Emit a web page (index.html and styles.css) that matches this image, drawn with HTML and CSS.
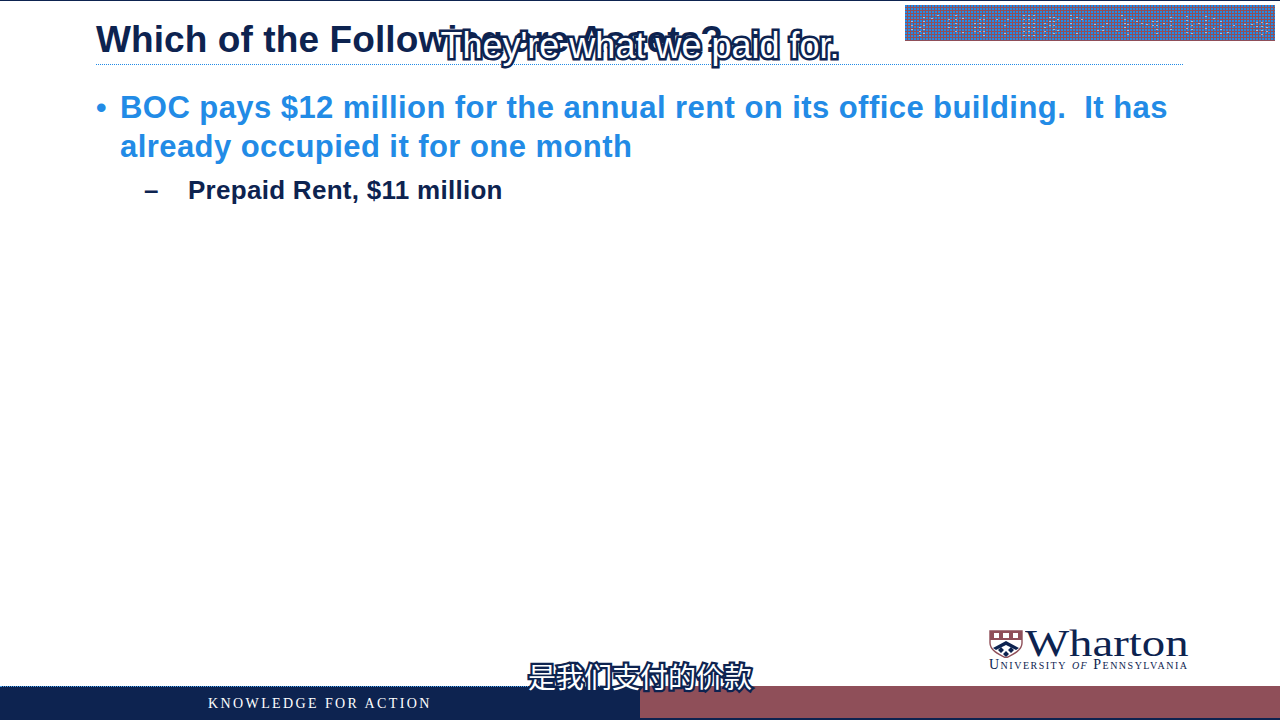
FILE: index.html
```html
<!DOCTYPE html>
<html lang="en">
<head>
<meta charset="utf-8">
<title>Which of the Following are Assets?</title>
<link rel="stylesheet" href="styles.css">
</head>
<body>
<div class="slide">
  <header class="head">
    <h1 class="title">Which of the Following are Assets?</h1>
  </header>
  <main class="content">
    <div class="bullet">
      <span class="dot">•</span>
      <p class="lead">BOC pays $12 million for the annual rent on its office building.&nbsp; It has already occupied it for one month</p>
    </div>
    <div class="sub">
      <span class="dash">–</span>
      <p class="subtext">Prepaid Rent, $11 million</p>
    </div>
  </main>
  <div class="brand">
    <svg class="crest" width="34" height="28" viewBox="0 0 34 28" aria-hidden="true">
      <path d="M1 1H33V13C33 20 25 24 17 28C9 24 1 20 1 13Z" fill="#fff" stroke="#8f4f59" stroke-width="1.4"/>
      <rect x="1" y="1" width="32" height="9" fill="#8f4f59"/>
      <path d="M5 3h5v5H5zM14 3h6v5h-6zM24 3h5v5h-5z" fill="#fff"/>
      <path d="M4 18L17 11L30 18L27 20L17 15L7 20Z" fill="#0d2350"/>
      <path d="M9 20l3-3 3 3-3 3zM19 20l3-3 3 3-3 3zM14 24l3-3 3 3-3 3z" fill="#0d2350"/>
    </svg>
    <div class="brand-text">
      <div class="wordmark">Wharton</div>
      <div class="univ">University <i>of</i> Pennsylvania</div>
    </div>
  </div>
  <footer class="foot">
    <div class="foot-left">KNOWLEDGE FOR ACTION</div>
    <div class="foot-right"></div>
  </footer>
  <svg class="stamp" width="370" height="36" viewBox="0 0 370 36" aria-hidden="true">
    <defs>
      <pattern id="dots" width="3" height="3" patternUnits="userSpaceOnUse">
        <rect width="2" height="2" fill="#228be6"/>
      </pattern>
    </defs>
    <rect width="370" height="36" fill="#8f4f59"/>
    <rect width="370" height="36" fill="url(#dots)"/>
    <path class="stamp-noise" d="M7 16v12M15 22v10M19 12v20M27 13v2M33 10v2M44 14v12M51 10v20M58 13v2M58 27v2M70 18v10M75 14v14M79 10v22M92 14v2M100 20v2M100 28v2M103 14v2M119 10v22M124 10v24M129 10v22M140 18v14M145 12v10M149 12v18M153 14v2M153 25v2M166 10v14M172 12v2M172 28v2M177 14v2M190 19v2M193 25v2M198 21v8M202 18v2M212 25v2M217 10v2M220 14v10M223 19v2M223 25v8M227 14v2M232 16v2M237 18v2M242 19v2M248 16v8M252 16v14M259 18v2M266 12v16M282 11v18M287 16v14M294 18v2M301 11v18M309 13v2M309 23v2M316 16v14M323 27v2M329 20v2M340 19v2M347 19v2M352 17v12M357 17v14M362 18v12"/>
  </svg>
  <div class="cap cap-en">They're what we paid for.</div>
  <div class="cap cap-zh">是我们支付的价款</div>
</div>
</body>
</html>
```
FILE: styles.css
```css
* { box-sizing: border-box; }
html, body { margin: 0; padding: 0; background: #fff; }
body { width: 1280px; height: 720px; overflow: hidden; font-family: "Liberation Sans", Arial, sans-serif; }
.slide { position: relative; width: 1280px; height: 720px; display: flex; flex-direction: column; background: #fff; border-top: 1px solid #0d2350; }
.head { margin: 0 97px 0 96px; height: 64px; padding-top: 16px; border-bottom: 1px dotted #228be6; }
.title { margin: 0; font-size: 37px; line-height: 46px; font-weight: 700; letter-spacing: 0.1px; color: #0d2350; white-space: nowrap; }
.content { padding: 23px 90px 0 96px; flex: 1; }
.bullet { display: flex; }
.dot { flex: none; width: 24px; font-size: 30px; line-height: 39px; font-weight: 700; color: #228be6; }
.lead { margin: 0; font-size: 31px; line-height: 39px; font-weight: 700; letter-spacing: 0.44px; color: #228be6; }
.sub { display: flex; margin: 7px 0 0 48px; }
.dash { flex: none; width: 44px; font-size: 26px; line-height: 34px; font-weight: 700; color: #0d2350; }
.subtext { margin: 0; font-size: 26px; line-height: 34px; font-weight: 700; letter-spacing: 0.28px; color: #0d2350; }
.brand { flex: none; margin: 0 91px 16px auto; width: 200px; position: relative; height: 40px; }
.crest { position: absolute; left: 0; top: 0; }
.wordmark { font-family: "Liberation Serif", serif; font-size: 38px; line-height: 27px; color: #0d2350; margin-left: 36px; transform: scaleX(1.23); transform-origin: left center; white-space: nowrap; }
.univ { font-family: "Liberation Serif", serif; font-variant: small-caps; font-size: 14px; line-height: 15px; color: #0d2350; letter-spacing: 1.5px; white-space: nowrap; }
.foot { flex: none; display: flex; height: 34px; background: #0d2350; }
.foot-left { width: 640px; padding-left: 208px; font-family: "Liberation Serif", serif; font-size: 14px; line-height: 33px; color: #fff; letter-spacing: 2.4px; border-top: 1px dotted #4aa3ee; }
.foot-right { width: 640px; height: 32px; background: #8f4f59; }
.stamp { position: absolute; left: 905px; top: 4px; }
.stamp-noise { fill: none; stroke: #fff; stroke-width: 1; stroke-dasharray: 1 3; }
.cap { position: absolute; left: 0; width: 1280px; text-align: center; font-weight: 400; color: #fff; paint-order: stroke fill; -webkit-text-stroke: 5px #0d2350; }
.cap-en { top: 23px; font-family: "Liberation Sans", sans-serif; font-size: 36px; line-height: 44px; }
.cap-zh { top: 659px; font-family: "Noto Sans CJK SC", sans-serif; font-size: 28px; line-height: 32px; -webkit-text-stroke: 4.5px #0d2350; }
```
